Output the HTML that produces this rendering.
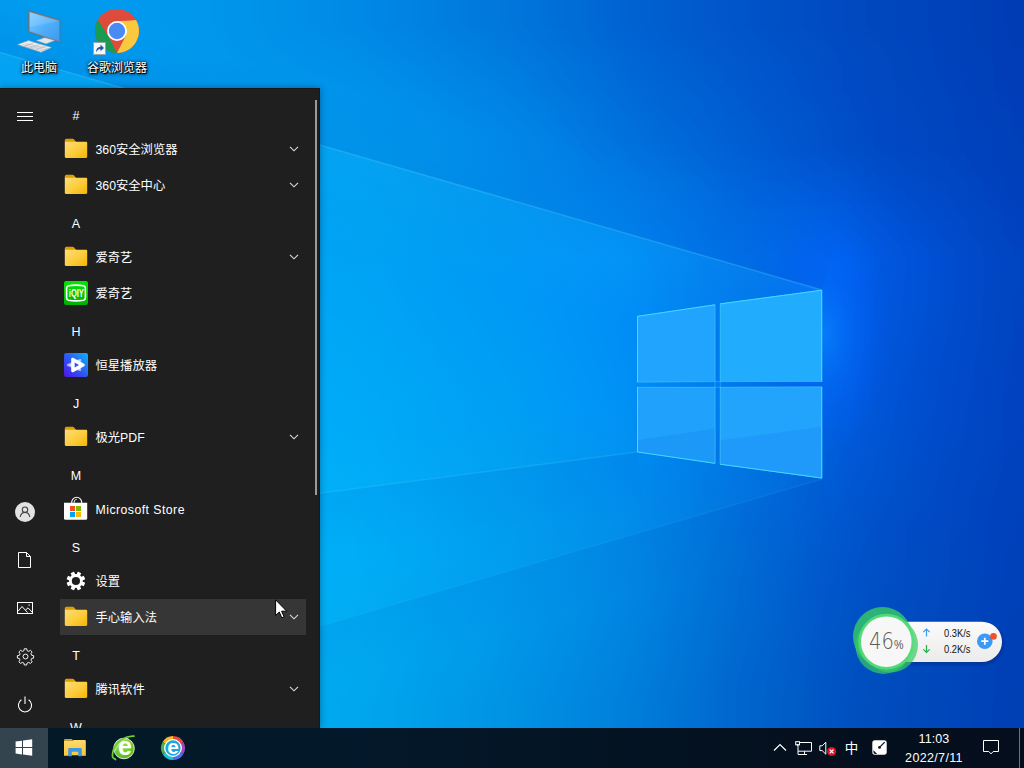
<!DOCTYPE html>
<html lang="zh-CN"><head><meta charset="utf-8"><title>Desktop</title>
<style>
*{box-sizing:border-box;margin:0;padding:0}
html,body{width:1024px;height:768px;overflow:hidden;background:#0a6fd6}
body{font-family:"Liberation Sans","Noto Sans CJK SC",sans-serif;position:relative;color:#fff}
svg{display:block;overflow:visible}
#wall{position:absolute;left:0;top:0;width:1024px;height:768px;overflow:hidden}
.dicon{position:absolute;top:0;width:78px;height:84px}
.dicon svg{position:absolute}
.dicon .lbl{position:absolute;left:-20px;right:-20px;top:60px;text-align:center;font-size:12px;line-height:16px;color:#fff;text-shadow:1px 1px 0 rgba(0,0,0,.9),1px 1px 2px #000,0 0 3px rgba(0,0,0,.85),0 1px 4px rgba(0,0,0,.6)}
#startshadow{position:absolute;left:0;top:80px;width:328px;height:648px;pointer-events:none}
#start{position:absolute;left:0;top:88px;width:320px;height:640px;background:#1f1f1f;overflow:hidden;box-shadow:0 0 7px rgba(0,0,0,.35);border-top:1px solid #1b1715;border-right:1px solid #1b1715}
#start .in{position:absolute;left:0;top:-1px;width:320px;height:640px}
#start .sb{position:absolute;left:315px;top:12px;width:2px;height:395px;background:#9a9a9a}
.rail svg{position:absolute}
.hdr{position:absolute;left:66px;width:20px;text-align:center;margin-top:1px;font-size:12.5px;line-height:16px;color:#fff}
.row{position:absolute;left:60px;width:246px;height:36px}
.row.hl{background:#363636}
.row .t{position:absolute;left:35.5px;top:10px;font-size:12.3px;line-height:18px;color:#fff;white-space:nowrap}
.row .ic{position:absolute;left:4px;top:6px;width:24px;height:24px}
.row .chev{position:absolute;left:229px;top:15px;width:10px;height:6px}
#task{position:absolute;left:0;top:728px;width:1024px;height:40px;background:linear-gradient(90deg,#031a27 0%,#03182a 35%,#04111f 72%,#050e1d 100%)}
#task .startbtn{position:absolute;left:0;top:0;width:48px;height:40px;background:#33444e}
#task svg{position:absolute}
.tt{position:absolute;color:#fff;font-size:12.5px;line-height:16px;text-align:center;white-space:nowrap;letter-spacing:.1px}
#wid{position:absolute;left:0;top:0;width:1024px;height:768px;pointer-events:none}
</style></head>
<body>
<svg id="wall" viewBox="0 0 1024 768">
<defs><linearGradient id="s0" x1="0" y1="0" x2="0" y2="1"><stop offset="0.033" stop-color="#009cf0"/><stop offset="0.195" stop-color="#00a0f2"/><stop offset="0.339" stop-color="#00a6f6"/><stop offset="0.527" stop-color="#00acf8"/><stop offset="0.729" stop-color="#00b0f8"/><stop offset="0.918" stop-color="#00aaf0"/></linearGradient><linearGradient id="s1" x1="0" y1="0" x2="0" y2="1"><stop offset="0.033" stop-color="#009cf0"/><stop offset="0.195" stop-color="#00a0f2"/><stop offset="0.339" stop-color="#00a6f6"/><stop offset="0.527" stop-color="#00acf8"/><stop offset="0.729" stop-color="#00b0f8"/><stop offset="0.918" stop-color="#00aaf0"/></linearGradient><linearGradient id="s2" x1="0" y1="0" x2="0" y2="1"><stop offset="0.033" stop-color="#009cf0"/><stop offset="0.195" stop-color="#00a0f2"/><stop offset="0.339" stop-color="#00a6f6"/><stop offset="0.527" stop-color="#00acf8"/><stop offset="0.729" stop-color="#00b0f8"/><stop offset="0.918" stop-color="#00aaf0"/></linearGradient><linearGradient id="s3" x1="0" y1="0" x2="0" y2="1"><stop offset="0.033" stop-color="#009bef"/><stop offset="0.195" stop-color="#009ff2"/><stop offset="0.339" stop-color="#00a6f6"/><stop offset="0.527" stop-color="#00acf8"/><stop offset="0.729" stop-color="#00b0f8"/><stop offset="0.918" stop-color="#00aaf0"/></linearGradient><linearGradient id="s4" x1="0" y1="0" x2="0" y2="1"><stop offset="0.033" stop-color="#009aee"/><stop offset="0.195" stop-color="#009ef1"/><stop offset="0.339" stop-color="#00a5f5"/><stop offset="0.527" stop-color="#00acf8"/><stop offset="0.729" stop-color="#00b0f8"/><stop offset="0.918" stop-color="#00aaf0"/></linearGradient><linearGradient id="s5" x1="0" y1="0" x2="0" y2="1"><stop offset="0.033" stop-color="#009aee"/><stop offset="0.195" stop-color="#009ef1"/><stop offset="0.339" stop-color="#00a5f5"/><stop offset="0.527" stop-color="#00acf8"/><stop offset="0.729" stop-color="#00b0f8"/><stop offset="0.918" stop-color="#00aaf0"/></linearGradient><linearGradient id="s6" x1="0" y1="0" x2="0" y2="1"><stop offset="0.033" stop-color="#0099ed"/><stop offset="0.195" stop-color="#009df1"/><stop offset="0.339" stop-color="#00a5f5"/><stop offset="0.527" stop-color="#00acf8"/><stop offset="0.729" stop-color="#00b0f8"/><stop offset="0.918" stop-color="#00aaf0"/></linearGradient><linearGradient id="s7" x1="0" y1="0" x2="0" y2="1"><stop offset="0.033" stop-color="#0098ec"/><stop offset="0.195" stop-color="#009cf0"/><stop offset="0.339" stop-color="#00a4f4"/><stop offset="0.527" stop-color="#00acf8"/><stop offset="0.729" stop-color="#00b0f8"/><stop offset="0.918" stop-color="#00aaf0"/></linearGradient><linearGradient id="s8" x1="0" y1="0" x2="0" y2="1"><stop offset="0.033" stop-color="#0097ec"/><stop offset="0.195" stop-color="#009cf0"/><stop offset="0.339" stop-color="#00a4f4"/><stop offset="0.527" stop-color="#00acf8"/><stop offset="0.729" stop-color="#00b0f8"/><stop offset="0.918" stop-color="#00aaf0"/></linearGradient><linearGradient id="s9" x1="0" y1="0" x2="0" y2="1"><stop offset="0.033" stop-color="#0094ea"/><stop offset="0.195" stop-color="#009cf0"/><stop offset="0.339" stop-color="#00a4f4"/><stop offset="0.527" stop-color="#00abf8"/><stop offset="0.729" stop-color="#00aff7"/><stop offset="0.918" stop-color="#00a9ef"/></linearGradient><linearGradient id="s10" x1="0" y1="0" x2="0" y2="1"><stop offset="0.033" stop-color="#0091e9"/><stop offset="0.195" stop-color="#009cf0"/><stop offset="0.339" stop-color="#00a4f4"/><stop offset="0.527" stop-color="#00abf8"/><stop offset="0.729" stop-color="#00aff7"/><stop offset="0.918" stop-color="#00a9ef"/></linearGradient><linearGradient id="s11" x1="0" y1="0" x2="0" y2="1"><stop offset="0.033" stop-color="#008ee8"/><stop offset="0.195" stop-color="#009cf0"/><stop offset="0.339" stop-color="#00a4f4"/><stop offset="0.527" stop-color="#00abf8"/><stop offset="0.729" stop-color="#00aff7"/><stop offset="0.918" stop-color="#00a9ef"/></linearGradient><linearGradient id="s12" x1="0" y1="0" x2="0" y2="1"><stop offset="0.033" stop-color="#008be7"/><stop offset="0.195" stop-color="#009cf0"/><stop offset="0.339" stop-color="#00a4f4"/><stop offset="0.527" stop-color="#00aaf8"/><stop offset="0.729" stop-color="#00aef6"/><stop offset="0.918" stop-color="#00a8ee"/></linearGradient><linearGradient id="s13" x1="0" y1="0" x2="0" y2="1"><stop offset="0.033" stop-color="#0088e5"/><stop offset="0.195" stop-color="#009aef"/><stop offset="0.339" stop-color="#00a3f4"/><stop offset="0.527" stop-color="#00a9f8"/><stop offset="0.729" stop-color="#00acf5"/><stop offset="0.918" stop-color="#00a6ed"/></linearGradient><linearGradient id="s14" x1="0" y1="0" x2="0" y2="1"><stop offset="0.033" stop-color="#0084e3"/><stop offset="0.195" stop-color="#0096ee"/><stop offset="0.339" stop-color="#00a0f4"/><stop offset="0.527" stop-color="#00a7f7"/><stop offset="0.729" stop-color="#00a8f3"/><stop offset="0.918" stop-color="#00a1eb"/></linearGradient><linearGradient id="s15" x1="0" y1="0" x2="0" y2="1"><stop offset="0.033" stop-color="#0080e1"/><stop offset="0.195" stop-color="#0093ed"/><stop offset="0.339" stop-color="#009df4"/><stop offset="0.527" stop-color="#00a5f6"/><stop offset="0.729" stop-color="#00a4f2"/><stop offset="0.918" stop-color="#009de9"/></linearGradient><linearGradient id="s16" x1="0" y1="0" x2="0" y2="1"><stop offset="0.033" stop-color="#007cde"/><stop offset="0.195" stop-color="#008feb"/><stop offset="0.339" stop-color="#009bf4"/><stop offset="0.527" stop-color="#00a2f5"/><stop offset="0.729" stop-color="#00a0f0"/><stop offset="0.918" stop-color="#0099e6"/></linearGradient><linearGradient id="s17" x1="0" y1="0" x2="0" y2="1"><stop offset="0.033" stop-color="#0078dc"/><stop offset="0.195" stop-color="#008bea"/><stop offset="0.339" stop-color="#0098f4"/><stop offset="0.527" stop-color="#00a0f4"/><stop offset="0.729" stop-color="#009cee"/><stop offset="0.918" stop-color="#0095e4"/></linearGradient><linearGradient id="s18" x1="0" y1="0" x2="0" y2="1"><stop offset="0.033" stop-color="#0073da"/><stop offset="0.195" stop-color="#0086e7"/><stop offset="0.339" stop-color="#0096f5"/><stop offset="0.527" stop-color="#009df4"/><stop offset="0.729" stop-color="#0098ec"/><stop offset="0.918" stop-color="#008fe2"/></linearGradient><linearGradient id="s19" x1="0" y1="0" x2="0" y2="1"><stop offset="0.033" stop-color="#026ed7"/><stop offset="0.195" stop-color="#0280e4"/><stop offset="0.339" stop-color="#0293f6"/><stop offset="0.527" stop-color="#0299f5"/><stop offset="0.729" stop-color="#0293ea"/><stop offset="0.918" stop-color="#028ae0"/></linearGradient><linearGradient id="s20" x1="0" y1="0" x2="0" y2="1"><stop offset="0.033" stop-color="#0269d4"/><stop offset="0.195" stop-color="#0279e1"/><stop offset="0.339" stop-color="#0290f7"/><stop offset="0.527" stop-color="#0295f6"/><stop offset="0.729" stop-color="#028ee8"/><stop offset="0.918" stop-color="#0285de"/></linearGradient><linearGradient id="s21" x1="0" y1="0" x2="0" y2="1"><stop offset="0.033" stop-color="#0263d2"/><stop offset="0.195" stop-color="#0273de"/><stop offset="0.339" stop-color="#028df7"/><stop offset="0.527" stop-color="#0291f6"/><stop offset="0.729" stop-color="#0289e5"/><stop offset="0.918" stop-color="#027fdc"/></linearGradient><linearGradient id="s22" x1="0" y1="0" x2="0" y2="1"><stop offset="0.033" stop-color="#025fcf"/><stop offset="0.195" stop-color="#026ddb"/><stop offset="0.339" stop-color="#0285f3"/><stop offset="0.527" stop-color="#028af3"/><stop offset="0.729" stop-color="#0281e1"/><stop offset="0.918" stop-color="#0278d8"/></linearGradient><linearGradient id="s23" x1="0" y1="0" x2="0" y2="1"><stop offset="0.033" stop-color="#025bcc"/><stop offset="0.195" stop-color="#0268d8"/><stop offset="0.339" stop-color="#027def"/><stop offset="0.527" stop-color="#0283f0"/><stop offset="0.729" stop-color="#0279dc"/><stop offset="0.918" stop-color="#0271d4"/></linearGradient><linearGradient id="s24" x1="0" y1="0" x2="0" y2="1"><stop offset="0.033" stop-color="#0357ca"/><stop offset="0.195" stop-color="#0362d6"/><stop offset="0.339" stop-color="#0375eb"/><stop offset="0.527" stop-color="#037cee"/><stop offset="0.729" stop-color="#0371d7"/><stop offset="0.918" stop-color="#036ad0"/></linearGradient><linearGradient id="s25" x1="0" y1="0" x2="0" y2="1"><stop offset="0.033" stop-color="#0353c7"/><stop offset="0.195" stop-color="#035cd3"/><stop offset="0.339" stop-color="#036fe9"/><stop offset="0.527" stop-color="#0375ea"/><stop offset="0.729" stop-color="#0369d3"/><stop offset="0.918" stop-color="#0363cc"/></linearGradient><linearGradient id="s26" x1="0" y1="0" x2="0" y2="1"><stop offset="0.033" stop-color="#0350c5"/><stop offset="0.195" stop-color="#0358d0"/><stop offset="0.339" stop-color="#036beb"/><stop offset="0.527" stop-color="#036de6"/><stop offset="0.729" stop-color="#0362d0"/><stop offset="0.918" stop-color="#035dc8"/></linearGradient><linearGradient id="s27" x1="0" y1="0" x2="0" y2="1"><stop offset="0.033" stop-color="#034dc2"/><stop offset="0.195" stop-color="#0353cd"/><stop offset="0.339" stop-color="#0367ee"/><stop offset="0.527" stop-color="#0364e2"/><stop offset="0.729" stop-color="#035acd"/><stop offset="0.918" stop-color="#0356c4"/></linearGradient><linearGradient id="s28" x1="0" y1="0" x2="0" y2="1"><stop offset="0.033" stop-color="#034ac0"/><stop offset="0.195" stop-color="#034ec9"/><stop offset="0.339" stop-color="#0362ee"/><stop offset="0.527" stop-color="#035cdd"/><stop offset="0.729" stop-color="#0353c9"/><stop offset="0.918" stop-color="#0350c0"/></linearGradient><linearGradient id="s29" x1="0" y1="0" x2="0" y2="1"><stop offset="0.033" stop-color="#0347bd"/><stop offset="0.195" stop-color="#034ac5"/><stop offset="0.339" stop-color="#0358e0"/><stop offset="0.527" stop-color="#0354d5"/><stop offset="0.729" stop-color="#034fc5"/><stop offset="0.918" stop-color="#034dbd"/></linearGradient><linearGradient id="s30" x1="0" y1="0" x2="0" y2="1"><stop offset="0.033" stop-color="#0345bb"/><stop offset="0.195" stop-color="#0347c2"/><stop offset="0.339" stop-color="#0353d8"/><stop offset="0.527" stop-color="#0350d0"/><stop offset="0.729" stop-color="#034bc2"/><stop offset="0.918" stop-color="#034abb"/></linearGradient><linearGradient id="s31" x1="0" y1="0" x2="0" y2="1"><stop offset="0.033" stop-color="#0342b9"/><stop offset="0.195" stop-color="#0345bf"/><stop offset="0.339" stop-color="#034ed1"/><stop offset="0.527" stop-color="#034bcb"/><stop offset="0.729" stop-color="#0348bf"/><stop offset="0.918" stop-color="#0346b9"/></linearGradient><linearGradient id="s32" x1="0" y1="0" x2="0" y2="1"><stop offset="0.033" stop-color="#0340b7"/><stop offset="0.195" stop-color="#0342bc"/><stop offset="0.339" stop-color="#0349c9"/><stop offset="0.527" stop-color="#0347c6"/><stop offset="0.729" stop-color="#0344bc"/><stop offset="0.918" stop-color="#0343b7"/></linearGradient><linearGradient id="s33" x1="0" y1="0" x2="0" y2="1"><stop offset="0.033" stop-color="#033db5"/><stop offset="0.195" stop-color="#033fb9"/><stop offset="0.339" stop-color="#0344c2"/><stop offset="0.527" stop-color="#0343c1"/><stop offset="0.729" stop-color="#0341b9"/><stop offset="0.918" stop-color="#0340b5"/></linearGradient><linearGradient id="s34" x1="0" y1="0" x2="0" y2="1"><stop offset="0.033" stop-color="#033cb4"/><stop offset="0.195" stop-color="#033eb8"/><stop offset="0.339" stop-color="#0342be"/><stop offset="0.527" stop-color="#0341be"/><stop offset="0.729" stop-color="#033fb8"/><stop offset="0.918" stop-color="#033eb4"/></linearGradient><linearGradient id="s35" x1="0" y1="0" x2="0" y2="1"><stop offset="0.033" stop-color="#033cb4"/><stop offset="0.195" stop-color="#033eb8"/><stop offset="0.339" stop-color="#0342be"/><stop offset="0.527" stop-color="#0341be"/><stop offset="0.729" stop-color="#033fb8"/><stop offset="0.918" stop-color="#033eb4"/></linearGradient><filter id="hb" filterUnits="userSpaceOnUse" x="-64" y="0" width="1152" height="768"><feGaussianBlur stdDeviation="18 0"/></filter></defs>
<g filter="url(#hb)"><rect x="-64" y="0" width="33" height="768" fill="url(#s0)"/><rect x="-32" y="0" width="33" height="768" fill="url(#s1)"/><rect x="0" y="0" width="33" height="768" fill="url(#s2)"/><rect x="32" y="0" width="33" height="768" fill="url(#s3)"/><rect x="64" y="0" width="33" height="768" fill="url(#s4)"/><rect x="96" y="0" width="33" height="768" fill="url(#s5)"/><rect x="128" y="0" width="33" height="768" fill="url(#s6)"/><rect x="160" y="0" width="33" height="768" fill="url(#s7)"/><rect x="192" y="0" width="33" height="768" fill="url(#s8)"/><rect x="224" y="0" width="33" height="768" fill="url(#s9)"/><rect x="256" y="0" width="33" height="768" fill="url(#s10)"/><rect x="288" y="0" width="33" height="768" fill="url(#s11)"/><rect x="320" y="0" width="33" height="768" fill="url(#s12)"/><rect x="352" y="0" width="33" height="768" fill="url(#s13)"/><rect x="384" y="0" width="33" height="768" fill="url(#s14)"/><rect x="416" y="0" width="33" height="768" fill="url(#s15)"/><rect x="448" y="0" width="33" height="768" fill="url(#s16)"/><rect x="480" y="0" width="33" height="768" fill="url(#s17)"/><rect x="512" y="0" width="33" height="768" fill="url(#s18)"/><rect x="544" y="0" width="33" height="768" fill="url(#s19)"/><rect x="576" y="0" width="33" height="768" fill="url(#s20)"/><rect x="608" y="0" width="33" height="768" fill="url(#s21)"/><rect x="640" y="0" width="33" height="768" fill="url(#s22)"/><rect x="672" y="0" width="33" height="768" fill="url(#s23)"/><rect x="704" y="0" width="33" height="768" fill="url(#s24)"/><rect x="736" y="0" width="33" height="768" fill="url(#s25)"/><rect x="768" y="0" width="33" height="768" fill="url(#s26)"/><rect x="800" y="0" width="33" height="768" fill="url(#s27)"/><rect x="832" y="0" width="33" height="768" fill="url(#s28)"/><rect x="864" y="0" width="33" height="768" fill="url(#s29)"/><rect x="896" y="0" width="33" height="768" fill="url(#s30)"/><rect x="928" y="0" width="33" height="768" fill="url(#s31)"/><rect x="960" y="0" width="33" height="768" fill="url(#s32)"/><rect x="992" y="0" width="33" height="768" fill="url(#s33)"/><rect x="1024" y="0" width="33" height="768" fill="url(#s34)"/><rect x="1056" y="0" width="33" height="768" fill="url(#s35)"/></g>
<defs>
<linearGradient id="beam" gradientUnits="userSpaceOnUse" x1="0" y1="0" x2="830" y2="0">
<stop offset="0" stop-color="#40d8ff" stop-opacity=".03"/><stop offset=".5" stop-color="#40d8ff" stop-opacity=".05"/><stop offset="1" stop-color="#40c8ff" stop-opacity=".1"/>
</linearGradient>
<radialGradient id="glow" gradientUnits="userSpaceOnUse" cx="0" cy="0" r="1" gradientTransform="translate(824 335) scale(66 120)">
<stop offset="0" stop-color="#0884ff" stop-opacity=".75"/><stop offset=".5" stop-color="#0468ff" stop-opacity=".38"/><stop offset="1" stop-color="#0258ff" stop-opacity="0"/>
</radialGradient>
<linearGradient id="pane" x1="0" y1="0" x2="1" y2="1">
<stop offset="0" stop-color="#2aa6f6"/><stop offset="1" stop-color="#1e98f4"/>
</linearGradient>
</defs>
<rect x="750" y="205" width="150" height="260" fill="url(#glow)"/>
<defs><linearGradient id="bt1" gradientUnits="userSpaceOnUse" x1="-40.0" y1="41.0" x2="-65.0" y2="127.5"><stop offset="0" stop-color="#20d0ff" stop-opacity="0.13"/><stop offset="1" stop-color="#20d0ff" stop-opacity="0"/></linearGradient><linearGradient id="bt0" gradientUnits="userSpaceOnUse" x1="-40.0" y1="41.0" x2="-23.3" y2="-16.6"><stop offset="0" stop-color="#0030a0" stop-opacity="0.08"/><stop offset="1" stop-color="#0030a0" stop-opacity="0"/></linearGradient><linearGradient id="bf1a" gradientUnits="userSpaceOnUse" x1="-40.0" y1="540.0" x2="-47.7" y2="480.5"><stop offset="0" stop-color="#20d0ff" stop-opacity="0.06"/><stop offset="1" stop-color="#20d0ff" stop-opacity="0"/></linearGradient><linearGradient id="bf1b" gradientUnits="userSpaceOnUse" x1="-40.0" y1="540.0" x2="-32.3" y2="599.5"><stop offset="0" stop-color="#0040b0" stop-opacity="0.06"/><stop offset="1" stop-color="#0040b0" stop-opacity="0"/></linearGradient><linearGradient id="bf2a" gradientUnits="userSpaceOnUse" x1="-40.0" y1="731.6" x2="-56.9" y2="674.0"><stop offset="0" stop-color="#20d0ff" stop-opacity="0.05"/><stop offset="1" stop-color="#20d0ff" stop-opacity="0"/></linearGradient><linearGradient id="bf2b" gradientUnits="userSpaceOnUse" x1="-40.0" y1="731.6" x2="-23.1" y2="789.1"><stop offset="0" stop-color="#0040b0" stop-opacity="0.07"/><stop offset="1" stop-color="#0040b0" stop-opacity="0"/></linearGradient></defs><polygon points="-40.0,41.0 822.0,290.0 797.0,376.5 -65.0,127.5" fill="url(#bt1)"/><polygon points="-40.0,41.0 822.0,290.0 838.7,232.4 -23.3,-16.6" fill="url(#bt0)"/><polygon points="-40.0,540.0 637.0,452.0 629.3,392.5 -47.7,480.5" fill="url(#bf1a)"/><polygon points="-40.0,540.0 637.0,452.0 644.7,511.5 -32.3,599.5" fill="url(#bf1b)"/><polygon points="-40.0,731.6 822.0,479.0 805.1,421.4 -56.9,674.0" fill="url(#bf2a)"/><polygon points="-40.0,731.6 822.0,479.0 838.9,536.6 -23.1,789.1" fill="url(#bf2b)"/><line x1="-40" y1="41" x2="822" y2="290" stroke="#50d0ff" stroke-opacity=".3" stroke-width="1.5"/><line x1="-40" y1="540" x2="637" y2="452" stroke="#50d8ff" stroke-opacity=".2" stroke-width="1.5"/><line x1="-40" y1="731.6" x2="822" y2="479" stroke="#50d0ff" stroke-opacity=".1" stroke-width="1.5"/>
<g id="logo">
<polygon points="637,316 715.4,304.3 715.4,381.7 637,382.4" fill="#20a4fe"/>
<polygon points="719.8,303.5 822.2,289.7 822.2,381.7 719.8,381.7" fill="#22acfe"/>
<polygon points="637,387 715.4,387 715.4,463.7 637,452" fill="#20a2fc"/>
<polygon points="719.8,387 822.2,386.5 822.2,478.5 719.8,464.5" fill="#22a4fc"/>
<polygon points="637,440.3 715.4,428.5 715.4,463.7 637,452" fill="#1c98f8"/>
<polygon points="719.8,440.3 822.2,426.7 822.2,478.5 719.8,464.5" fill="#209afa"/>
<g fill="none" stroke="#48e0ff" stroke-width="1" stroke-opacity=".9">
<polyline points="637.5,382 637.5,316.3 715,304.8"/>
<polyline points="720,303.9 821.7,290.2 821.7,381.5"/>
<polyline points="637.5,387 637.5,452 715,463.3"/>
<polyline points="720,464.2 821.7,478 821.7,387"/>
</g>
<g fill="none" stroke="#58d8ff" stroke-width="1" stroke-opacity=".35">
<line x1="715" y1="305" x2="715" y2="463"/><line x1="720.3" y1="304" x2="720.3" y2="464"/>
<line x1="637" y1="382" x2="822" y2="381.3"/><line x1="637" y1="387.4" x2="822" y2="387"/>
</g>
</g>
</svg>

<!-- shared symbols -->
<svg width="0" height="0" style="position:absolute">
<defs>
<linearGradient id="fg" x1="0" y1="0" x2="1" y2="1"><stop offset="0" stop-color="#ffdd74"/><stop offset=".55" stop-color="#fccc3c"/><stop offset="1" stop-color="#f5b400"/></linearGradient>
<symbol id="folder" viewBox="0 0 24 24">
<path d="M.8 3.300a1.500 1.500 0 0 1 1.500-1.500h6.400c.5 0 .9.200 1.200.5l2.300 2.700H.8z" fill="#e09c06"/>
<path d="M.8 4.700H22c.7 0 1.200.5 1.200 1.200v13.900c0 .7-.5 1.200-1.200 1.200H2c-.7 0-1.200-.5-1.200-1.200z" fill="url(#fg)"/>
</symbol>
<symbol id="chev" viewBox="0 0 10 6"><polyline points="1,.8 5,4.800 9,.8" fill="none" stroke="#dcdcdc" stroke-width="1.100"/></symbol>
</defs>
</svg>

<!-- desktop icons -->
<div class="dicon" style="left:0">
<svg style="left:15px;top:8px" width="48" height="46" viewBox="0 0 48 46">
<defs><linearGradient id="scr" x1="0" y1="0" x2="1" y2="1"><stop offset="0" stop-color="#7fccff"/><stop offset=".5" stop-color="#52b0fa"/><stop offset="1" stop-color="#3a9af0"/></linearGradient></defs>
<polygon points="13.500,2.500 45,12 45,34.500 13.500,24" fill="#7d8389" stroke="#666c72" stroke-width=".6"/>
<polygon points="14.700,4.300 44,13 44,32.800 14.700,23.300" fill="url(#scr)"/><polygon points="14.700,4.300 44,13 14.700,19" fill="#fff" fill-opacity=".13"/>
<polygon points="28,29.500 32,30.700 32,33.500 28,32.300" fill="#b9bec4"/>
<polygon points="21.500,32.500 30,29.800 39.500,32.600 31,35.800" fill="#e4e7ea" stroke="#aab0b6" stroke-width=".5"/>
<polygon points="2.600,36.600 13.500,32.600 36.500,39.400 26,44.300" fill="#eceef0" stroke="#9aa0a6" stroke-width=".6"/>
<g stroke="#a8adb3" stroke-width=".55"><line x1="5.300" y1="37.600" x2="28.600" y2="43.100"/><line x1="8" y1="36.600" x2="31.200" y2="41.900"/><line x1="10.800" y1="35.600" x2="33.800" y2="40.700"/><line x1="9" y1="38.600" x2="19.500" y2="34.400"/><line x1="14.800" y1="40" x2="25.300" y2="36.100"/><line x1="20.600" y1="41.400" x2="31" y2="37.800"/></g>
</svg>
<span class="lbl">此电脑</span></div>

<div class="dicon" style="left:78px">
<svg style="left:17px;top:9px" width="44" height="44" viewBox="-22 -22 44 44">
<circle r="22" fill="#de4b3d"/>
<path d="M-19.050,11 A22 22 0 0 1 -19.050,-11 L-8.660,5 Z" fill="#1a9b52"/>
<path d="M-19.050,-11 L-8.660,5 L0,22 A22 22 0 0 1 -19.050,-11Z" fill="#1a9b52"/>
<path d="M0,22 A22 22 0 0 0 19.050,-11 L0,-10 L8.660,5 Z" fill="#fbc93d"/>
<path d="M-19.050,-11 A22 22 0 0 1 19.050,-11 L0,-10 L-8.660,5Z" fill="#de4b3d"/>
<circle r="10" fill="#fff"/><circle r="8.200" fill="#4a8af4"/>
</svg>
<svg style="left:15px;top:42px" width="13" height="13" viewBox="0 0 13 13"><rect x=".5" y=".5" width="12" height="12" fill="#f4f6f8" stroke="#9aa2aa"/><path d="M3 10.500c0-3.500 1.500-5.500 4.500-5.700V2.500L11 6 7.500 9.300V7c-2 .1-3.500 1.200-4.500 3.500z" fill="#2458a8"/></svg>
<span class="lbl">谷歌浏览器</span></div>

<!-- start menu -->
<div id="start"><div class="in">
<div class="sb"></div>
<div class="rail">
<svg style="left:17px;top:24px" width="16" height="9" viewBox="0 0 16 9"><path d="M0 .5h16M0 4.500h16M0 8.500h16" stroke="#fff" stroke-width="1"/></svg>
<svg style="left:15px;top:414px" width="20" height="20" viewBox="-10 -10 20 20"><circle r="10" fill="#e2e2e2"/><circle cx="0" cy="-2.300" r="2.700" fill="none" stroke="#444" stroke-width="1.100"/><path d="M-4.800 5c.6-3 2.500-4.600 4.800-4.600S4.200 2 4.800 5" fill="none" stroke="#444" stroke-width="1.100"/></svg>
<svg style="left:18px;top:464px" width="13" height="16" viewBox="0 0 13 16"><path d="M.5.500h8l4 4v11H.5z" fill="none" stroke="#fff" stroke-width="1"/><path d="M8.500.5v4h4" fill="none" stroke="#fff" stroke-width="1"/></svg>
<svg style="left:17px;top:514px" width="16" height="12" viewBox="0 0 16 12"><rect x=".5" y=".5" width="15" height="11" fill="none" stroke="#fff"/><path d="M.8 9.500 5 4.500l5.500 6M8.500 8.200l2.500-2.400 4.200 4.400" fill="none" stroke="#fff" stroke-width="1"/><rect x="11.500" y="2.500" width="1.200" height="1.200" fill="#fff"/></svg>
<svg style="left:16.500px;top:559.500px" width="17" height="17" viewBox="-9 -9 18 18"><g fill="none" stroke="#fff" stroke-width="1"><circle r="2.600"/><path id="gearo" d="M-1.300,-8.200h2.600l.4,2.100 1.700,.7 1.800,-1.200 1.800,1.800-1.200,1.800 .7,1.700 2.100,.4v2.600l-2.100,.4-.7,1.700 1.200,1.800-1.800,1.800-1.800,-1.200-1.700,.7-.4,2.100h-2.600l-.4,-2.100-1.700,-.7-1.800,1.200-1.800,-1.800 1.200,-1.800-.7,-1.700-2.100,-.4v-2.600l2.100,-.4 .7,-1.700-1.200,-1.800 1.800,-1.800 1.800,1.200 1.700,-.7z" stroke-linejoin="round"/></g></svg>
<svg style="left:17px;top:608px" width="16" height="17" viewBox="-8 -9 16 17"><path d="M-3.600,-5.200A6.600 6.600 0 1 0 3.600,-5.200" fill="none" stroke="#fff" stroke-width="1.100"/><path d="M0,-8.500v7.500" stroke="#fff" stroke-width="1.100"/></svg>
</div>

<div class="hdr" style="top:19px">#</div>
<div class="row" style="top:43px"><svg class="ic"><use href="#folder"/></svg><span class="t">360安全浏览器</span><svg class="chev"><use href="#chev"/></svg></div>
<div class="row" style="top:79px"><svg class="ic"><use href="#folder"/></svg><span class="t">360安全中心</span><svg class="chev"><use href="#chev"/></svg></div>
<div class="hdr" style="top:127px">A</div>
<div class="row" style="top:151px"><svg class="ic"><use href="#folder"/></svg><span class="t">爱奇艺</span><svg class="chev"><use href="#chev"/></svg></div>
<div class="row" style="top:187px"><svg class="ic" viewBox="0 0 24 24"><defs><linearGradient id="qy" x1="0" y1="0" x2="0" y2="1"><stop offset="0" stop-color="#04e404"/><stop offset="1" stop-color="#00b000"/></linearGradient></defs><rect width="24" height="24" rx="2.200" fill="url(#qy)"/><path d="M4.500 4.800Q12 3.400 19.500 4.800Q21.400 5.200 21.400 7.200V16.800Q21.400 18.800 19.500 19.200Q12 20.600 4.500 19.200Q2.600 18.800 2.600 16.800V7.200Q2.600 5.200 4.500 4.800Z" fill="none" stroke="#fff" stroke-width="1.600"/><text x="12.300" y="16.100" font-family="Liberation Sans,sans-serif" font-weight="bold" font-size="11.200" fill="#fff" text-anchor="middle" textLength="15" lengthAdjust="spacingAndGlyphs">iQIY</text></svg><span class="t">爱奇艺</span></div>
<div class="hdr" style="top:235px">H</div>
<div class="row" style="top:259px"><svg class="ic" viewBox="0 0 24 24"><defs><linearGradient id="hx" x1="0" y1="1" x2="1" y2="0"><stop offset="0" stop-color="#5212e6"/><stop offset=".5" stop-color="#2c5cf4"/><stop offset="1" stop-color="#0cb4ff"/></linearGradient></defs><rect width="24" height="24" rx="2.200" fill="url(#hx)"/><path d="M17 7 5 12l12 5z" fill="#fff" fill-opacity=".55" stroke="#fff" stroke-opacity=".55" stroke-width="2.400" stroke-linejoin="round" transform="translate(-1 0)"/><path d="M8.500 6 19.500 12 8.500 18z" fill="#fff" stroke="#fff" stroke-width="2.600" stroke-linejoin="round"/><path d="M10.700 9.600 15 12l-4.300 2.400z" fill="#2a58f2"/></svg><span class="t">恒星播放器</span></div>
<div class="hdr" style="top:307px">J</div>
<div class="row" style="top:331px"><svg class="ic"><use href="#folder"/></svg><span class="t">极光PDF</span><svg class="chev"><use href="#chev"/></svg></div>
<div class="hdr" style="top:379px">M</div>
<div class="row" style="top:403px"><svg class="ic" viewBox="0 0 24 24"><path d="M7.700 6V5.300a5 5 0 0 1 10 0V6" fill="none" stroke="#fff" stroke-width="1.100"/><path d="M10 6V5.700a3.300 3.300 0 0 1 2.800-3.500" fill="none" stroke="#fff" stroke-width=".9"/><path d="M0 5.800h23.200v15.400a1.500 1.500 0 0 1-1.500 1.500H1.500A1.500 1.500 0 0 1 0 21.200z" fill="#fff"/><rect x="6" y="9" width="5" height="5" fill="#f25022"/><rect x="12" y="9" width="5" height="5" fill="#7fba00"/><rect x="6" y="15" width="5" height="5" fill="#00a4ef"/><rect x="12" y="15" width="5" height="5" fill="#ffb900"/></svg><span class="t" style="letter-spacing:.45px">Microsoft Store</span></div>
<div class="hdr" style="top:451px">S</div>
<div class="row" style="top:475px"><svg class="ic" viewBox="-12 -12 24 24"><g transform="translate(-.1 0)"><g fill="#fff"><circle r="6.900"/><g id="tth"><rect x="-1.900" y="-9.300" width="3.800" height="18.600" rx=".5" transform="rotate(22.500)"/><rect x="-1.900" y="-9.300" width="3.800" height="18.600" rx=".5" transform="rotate(67.500)"/><rect x="-1.900" y="-9.300" width="3.800" height="18.600" rx=".5" transform="rotate(112.500)"/><rect x="-1.900" y="-9.300" width="3.800" height="18.600" rx=".5" transform="rotate(157.500)"/></g></g><circle r="4.100" fill="#1f1f1f"/></g></svg><span class="t">设置</span></div>
<div class="row hl" style="top:511px"><svg class="ic"><use href="#folder"/></svg><span class="t">手心输入法</span><svg class="chev"><use href="#chev"/></svg></div>
<div class="hdr" style="top:559px">T</div>
<div class="row" style="top:583px"><svg class="ic"><use href="#folder"/></svg><span class="t">腾讯软件</span><svg class="chev"><use href="#chev"/></svg></div>
<div class="hdr" style="top:630.500px">W</div>
</div></div>

<!-- taskbar -->
<div id="task"><div class="startbtn"></div>
<svg style="left:15px;top:11px" width="18" height="18" viewBox="0 0 18 18"><g fill="#fff"><polygon points=".6,2.600 7,1.700 7,8 .6,8"/><polygon points="8,1.550 17.200,.3 17.200,8 8,8"/><polygon points=".6,9 7,9 7,15.400 .6,14.500"/><polygon points="8,9 17.200,9 17.200,16.800 8,15.550"/></g></svg>
<svg style="left:64px;top:10px" width="22" height="20" viewBox="0 0 22 20"><defs><linearGradient id="fe" x1="0" y1="0" x2="0" y2="1"><stop offset="0" stop-color="#ffd970"/><stop offset="1" stop-color="#fbc738"/></linearGradient></defs><path d="M0 2.200A1.200 1.200 0 0 1 1.200 1h6.600l1.600 1.800H0z" fill="#e6a008"/><path d="M0 2.800h8.800l.8-.8h11.200a1 1 0 0 1 1 1v14.300H0z" fill="url(#fe)"/><path d="M4.200 18.300v-7a1.300 1.300 0 0 1 1.300-1.300h11a1.300 1.300 0 0 1 1.300 1.300v7h-3.600v-4.600H7.800v4.600z" fill="#3d98e4"/><rect x="0" y="17" width="4.200" height=".9" fill="#e2a820"/><rect x="17.800" y="17" width="4" height=".9" fill="#e2a820"/></svg>
<svg style="left:110px;top:6px" width="28" height="28" viewBox="-14 -14 28 28"><defs><radialGradient id="g3" cx=".4" cy=".3" r=".8"><stop offset="0" stop-color="#a2e44a"/><stop offset="1" stop-color="#46b41c"/></radialGradient></defs><circle cx="0" cy=".5" r="10.300" fill="url(#g3)" stroke="#f2f8ee" stroke-width=".9"/><path d="M10,-11.800C2,-12.500 -8.500,-6.500 -10.800,2.500S-10,9.500 -8.500,11.500" fill="none" stroke="#6ed030" stroke-width="1.700" stroke-linecap="round"/><path d="M4.500,-9.800C-1,-8.500 -6.500,-4 -9,3" fill="none" stroke="#eaffd8" stroke-opacity=".8" stroke-width=".8"/><text x="1" y="7.300" font-family="Liberation Sans,sans-serif" font-weight="bold" font-size="25" fill="#fff" text-anchor="middle">e</text></svg>
<svg style="left:160px;top:7px" width="26" height="26" viewBox="-13 -13 26 26"><g><path d="M0,0L-10.400,-6A12 12 0 0 1 0,-12Z" fill="#fbb91c"/><path d="M0,0L0,-12A12 12 0 0 1 10.400,-6Z" fill="#f2463c"/><path d="M0,0L10.400,-6A12 12 0 0 1 10.400,6Z" fill="#a347ba"/><path d="M0,0L10.400,6A12 12 0 0 1 0,12Z" fill="#4f6df0"/><path d="M0,0L0,12A12 12 0 0 1 -10.400,6Z" fill="#1fc0d8"/><path d="M0,0L-10.400,6A12 12 0 0 1 -10.400,-6Z" fill="#4caf50"/></g><circle r="8.300" fill="#1ea4e0" stroke="#fff" stroke-width="1.300"/><text x="0" y="5.800" font-family="Liberation Sans,sans-serif" font-weight="bold" font-size="21" fill="#fff" text-anchor="middle">e</text></svg>

<svg style="left:773px;top:15px" width="14" height="9" viewBox="0 0 14 9"><polyline points="1,7.500 7,1.500 13,7.500" fill="none" stroke="#fff" stroke-width="1.200"/></svg>
<svg style="left:795px;top:13px" width="18" height="15" viewBox="0 0 18 15"><g fill="none" stroke="#fff" stroke-width="1"><path d="M4.500 1.500h12v8.700H3"/><path d="M3 3.800v9.500M3 13.500h9M9.500 10.200v3.300"/><rect x=".7" y=".7" width="3.800" height="3.100"/></g><rect x="1.800" y="3" width="1.500" height="1.600" fill="#fff"/></svg>
<svg style="left:819px;top:13px" width="18" height="15" viewBox="0 0 18 15"><path d="M.8 4.800h2.400L6.800 1.200v12L3.200 9.600H.8z" fill="none" stroke="#fff" stroke-width="1"/><circle cx="12.600" cy="10.400" r="4.500" fill="#e81123"/><path d="M10.700 8.500l3.800 3.800M14.500 8.500l-3.800 3.800" stroke="#fff" stroke-width="1.100"/></svg>
<div class="tt" style="left:841.5px;top:12px;width:20px;font-size:13.500px;line-height:18px;letter-spacing:0">中</div>
<svg style="left:872px;top:12px" width="15" height="15" viewBox="0 0 15 15"><rect x=".3" y=".3" width="14.400" height="14.400" rx="2.600" fill="#fff"/><path d="M12.700 2.100 8.200 6.600" stroke="#0a1624" stroke-width="1.300"/><circle cx="7.500" cy="7.400" r="1.400" fill="#0a1624"/><path d="M1.400 10.200 5.200 13.900H3.400A2 2 0 0 1 1.400 11.900z" fill="#0a1624"/></svg>
<div class="tt" style="left:904px;top:3px;width:60px">11:03</div>
<div class="tt" style="left:904px;top:22px;width:60px;letter-spacing:.35px">2022/7/11</div>
<svg style="left:983px;top:12px" width="16" height="16" viewBox="0 0 16 16"><path d="M.5.500h15v11h-5.300l-2.200 2.400-2.200-2.400H.5z" fill="none" stroke="#fff" stroke-width="1"/></svg>
<div style="position:absolute;left:1019px;top:0;width:1px;height:40px;background:#6b727a"></div>
</div>

<!-- floating widget -->
<svg id="wid" viewBox="0 0 1024 768">
<defs><linearGradient id="pill" x1="0" y1="0" x2="0" y2="1"><stop offset="0" stop-color="#fbfbfb"/><stop offset="1" stop-color="#ebebeb"/></linearGradient>
<filter id="ws" x="-10%" y="-20%" width="120%" height="150%"><feGaussianBlur stdDeviation="1.500"/></filter></defs>
<rect x="880" y="623.500" width="123" height="41" rx="20.500" fill="#001850" fill-opacity=".35" filter="url(#ws)"/>
<rect x="880" y="621.700" width="122" height="40.300" rx="20.150" fill="url(#pill)"/>
<g fill="#38ca64"><circle cx="882.500" cy="636.500" r="29.500" fill-opacity=".8"/><circle cx="890.500" cy="645" r="27.500" fill-opacity=".7"/><circle cx="883.500" cy="646" r="28" fill-opacity=".7"/><circle cx="886.300" cy="641.700" r="28" fill="#54dc78" fill-opacity=".92"/></g>
<circle cx="886.300" cy="641.700" r="25.300" fill="#f7f7f7"/>
<text x="869" y="649.300" font-family="DejaVu Sans,sans-serif" font-weight="200" font-size="23" fill="#5c5c5c" textLength="25" lengthAdjust="spacingAndGlyphs">46</text>
<text x="894" y="649.300" font-family="Liberation Sans,sans-serif" font-size="13" fill="#555" textLength="9.500" lengthAdjust="spacingAndGlyphs">%</text>
<g fill="none" stroke-width="1.200"><path d="M926.500 636.500v-7.500M923.300 632.200l3.200-3.200 3.200 3.200" stroke="#3a9cf8"/><path d="M926.500 645v7.500M923.300 649.300l3.200 3.200 3.200-3.200" stroke="#22b045"/></g>
<text x="944" y="636.500" font-family="Liberation Sans,sans-serif" font-size="10.500" fill="#111" textLength="26.500" lengthAdjust="spacingAndGlyphs">0.3K/s</text>
<text x="944" y="652.500" font-family="Liberation Sans,sans-serif" font-size="10.500" fill="#111" textLength="26.500" lengthAdjust="spacingAndGlyphs">0.2K/s</text>
<circle cx="984.800" cy="641.200" r="7.800" fill="#3a9af8"/><path d="M981.300 641.200h7M984.800 637.700v7" stroke="#fff" stroke-width="1.700"/>
<circle cx="993.500" cy="636.400" r="3.300" fill="#f0502e"/>
</svg>

<!-- cursor -->
<svg style="position:absolute;left:275px;top:599px" width="13" height="20" viewBox="0 0 13 20"><path d="M.6.800v15.700l3.700-3.500 2.500 5.800 2.300-1-2.500-5.600h5.100z" fill="#fff" stroke="#000" stroke-width="1" stroke-linejoin="miter"/></svg>
</body></html>
